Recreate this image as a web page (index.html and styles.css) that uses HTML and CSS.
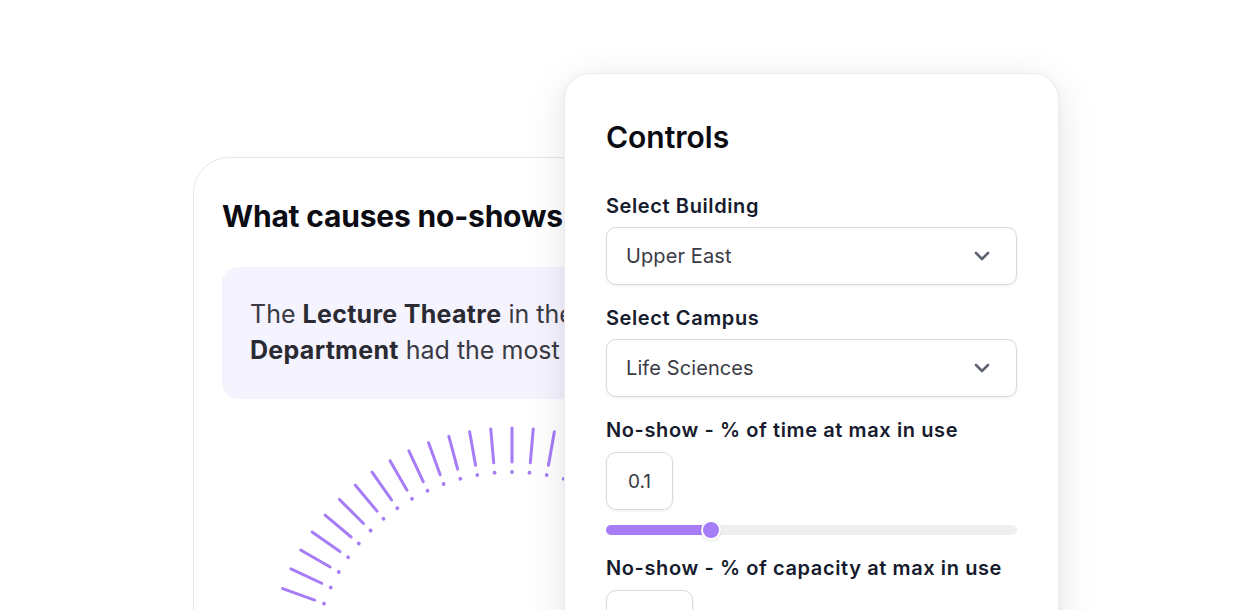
FILE: index.html
```
<!DOCTYPE html>
<html lang="en">
<head>
<meta charset="utf-8">
<title>No-shows</title>
<link rel="stylesheet" href="styles.css">
</head>
<body>
<div class="stage">
  <section class="insight-card">
    <h1 class="insight-title">What causes no-shows in your rooms?</h1>
    <div class="insight-box">
      <p class="insight-text">The <b>Lecture Theatre</b> in the <b>Physics</b><br><b>Department</b> had the most no-shows this term.</p>
    </div>
    <svg class="gauge" width="580" height="300" viewBox="0 0 580 300" aria-hidden="true">
      <defs>
        <g id="tick">
          <line class="tick-line" x1="290" y1="18" x2="290" y2="52"></line>
          <circle class="tick-dot" cx="290" cy="62" r="1.9"></circle>
        </g>
      </defs>
      <g class="gauge-ticks">
        <use href="#tick" transform="rotate(-70 290 262)"></use>
        <use href="#tick" transform="rotate(-65 290 262)"></use>
        <use href="#tick" transform="rotate(-60 290 262)"></use>
        <use href="#tick" transform="rotate(-55 290 262)"></use>
        <use href="#tick" transform="rotate(-50 290 262)"></use>
        <use href="#tick" transform="rotate(-45 290 262)"></use>
        <use href="#tick" transform="rotate(-40 290 262)"></use>
        <use href="#tick" transform="rotate(-35 290 262)"></use>
        <use href="#tick" transform="rotate(-30 290 262)"></use>
        <use href="#tick" transform="rotate(-25 290 262)"></use>
        <use href="#tick" transform="rotate(-20 290 262)"></use>
        <use href="#tick" transform="rotate(-15 290 262)"></use>
        <use href="#tick" transform="rotate(-10 290 262)"></use>
        <use href="#tick" transform="rotate(-5 290 262)"></use>
        <use href="#tick" transform="rotate(0 290 262)"></use>
        <use href="#tick" transform="rotate(5 290 262)"></use>
        <use href="#tick" transform="rotate(10 290 262)"></use>
        <use href="#tick" transform="rotate(15 290 262)"></use>
        <use href="#tick" transform="rotate(20 290 262)"></use>
        <use href="#tick" transform="rotate(25 290 262)"></use>
        <use href="#tick" transform="rotate(30 290 262)"></use>
        <use href="#tick" transform="rotate(35 290 262)"></use>
        <use href="#tick" transform="rotate(40 290 262)"></use>
        <use href="#tick" transform="rotate(45 290 262)"></use>
        <use href="#tick" transform="rotate(50 290 262)"></use>
        <use href="#tick" transform="rotate(55 290 262)"></use>
        <use href="#tick" transform="rotate(60 290 262)"></use>
        <use href="#tick" transform="rotate(65 290 262)"></use>
        <use href="#tick" transform="rotate(70 290 262)"></use>
      </g>
    </svg>
  </section>

  <aside class="controls-card">
    <h2 class="controls-title">Controls</h2>

    <div class="field">
      <div class="field-label">Select Building</div>
      <div class="select">
        <span class="select-value">Upper East</span>
        <svg class="chevron" width="16" height="10" viewBox="0 0 16 10" aria-hidden="true"><path d="M2 2 L8 8 L14 2"></path></svg>
      </div>
    </div>

    <div class="field">
      <div class="field-label">Select Campus</div>
      <div class="select">
        <span class="select-value">Life Sciences</span>
        <svg class="chevron" width="16" height="10" viewBox="0 0 16 10" aria-hidden="true"><path d="M2 2 L8 8 L14 2"></path></svg>
      </div>
    </div>

    <div class="field">
      <div class="field-label">No-show - % of time at max in use</div>
      <div class="num-input">0.1</div>
      <div class="slider">
        <div class="slider-fill" style="width:25.5%"></div>
        <div class="slider-thumb"></div>
      </div>
    </div>

    <div class="field">
      <div class="field-label">No-show - % of capacity at max in use</div>
      <div class="num-input num-input-wide"></div>
    </div>
  </aside>
</div>
</body>
</html>
```

FILE: styles.css
```
* { box-sizing: border-box; }

html, body {
  margin: 0;
  padding: 0;
  background: #ffffff;
}

body {
  font-family: Inter, "Liberation Sans", sans-serif;
  color: #1a1d2e;
}

.stage {
  position: relative;
  width: 1250px;
  height: 610px;
  overflow: hidden;
  padding: 157px 0 0 193px;
}

/* Back card */
.insight-card {
  width: 638px;
  height: 560px;
  border: 1px solid #e6e6ec;
  border-radius: 36px;
  background: #ffffff;
  padding: 40px 28px 0 28px;
}

.insight-title {
  margin: 0;
  font-size: 30px;
  line-height: 36px;
  font-weight: 700;
  color: #0c0c14;
  white-space: nowrap;
  letter-spacing: -0.2px;
}

.insight-box {
  margin-top: 33px;
  height: 132px;
  border-radius: 16px;
  background: #f5f3fe;
  padding: 29px 28px;
}

.insight-text {
  margin: 0;
  font-size: 25px;
  line-height: 36px;
  color: #3a3a44;
  white-space: nowrap;
  letter-spacing: 0;
}

.insight-text b {
  font-weight: 700;
  color: #2a2a33;
  letter-spacing: 0.3px;
}

.gauge {
  display: block;
  margin-top: 11px;
  overflow: visible;
}

.tick-line {
  stroke: #a67cf7;
  stroke-width: 3;
  stroke-linecap: round;
}

.tick-dot {
  fill: #a67cf7;
  stroke: none;
}

/* Controls card */
.controls-card {
  position: absolute;
  left: 564px;
  top: 73px;
  width: 495px;
  height: 600px;
  background: #ffffff;
  border: 1px solid #ececf0;
  border-radius: 26px;
  box-shadow: 0 8px 40px rgba(20, 20, 40, 0.10), 0 2px 8px rgba(20, 20, 40, 0.04);
  padding: 45px 41px 0 41px;
  display: flex;
  flex-direction: column;
}

.controls-title {
  margin: 0 0 39px 0;
  font-size: 30px;
  line-height: 36px;
  font-weight: 600;
  color: #0b0b12;
  letter-spacing: 0;
}

.field {
  display: flex;
  flex-direction: column;
  margin-bottom: 21px;
}

.field-label {
  font-size: 20px;
  line-height: 24px;
  font-weight: 600;
  color: #161b2e;
  letter-spacing: 0.6px;
  white-space: nowrap;
}

.select {
  margin-top: 9px;
  height: 58px;
  border: 1px solid #d9d9e3;
  border-radius: 10px;
  box-shadow: 0 1px 3px rgba(20, 20, 40, 0.08);
  display: flex;
  align-items: center;
  justify-content: space-between;
  padding: 0 26px 0 19px;
}

.select-value {
  font-size: 20px;
  color: #3b3b45;
  letter-spacing: 0.1px;
}

.chevron path {
  fill: none;
  stroke: #5e6472;
  stroke-width: 2.6;
  stroke-linecap: round;
  stroke-linejoin: round;
}

.num-input {
  margin-top: 10px;
  width: 67px;
  height: 58px;
  border: 1px solid #d9d9e3;
  border-radius: 10px;
  box-shadow: 0 1px 3px rgba(20, 20, 40, 0.08);
  display: flex;
  align-items: center;
  justify-content: center;
  font-size: 19px;
  color: #3b3b45;
}

.num-input-wide {
  width: 87px;
}

.slider {
  position: relative;
  margin-top: 15px;
  height: 10px;
  border-radius: 5px;
  background: #efefef;
}

.slider-fill {
  height: 100%;
  border-radius: 5px;
  background: #a67cf7;
}

.slider-thumb {
  position: absolute;
  left: 25.5%;
  top: 50%;
  width: 20px;
  height: 20px;
  margin: -10px 0 0 -10px;
  border-radius: 50%;
  background: #a67cf7;
  border: 2px solid #ffffff;
  box-shadow: 0 1px 3px rgba(20, 20, 40, 0.12);
}
```
